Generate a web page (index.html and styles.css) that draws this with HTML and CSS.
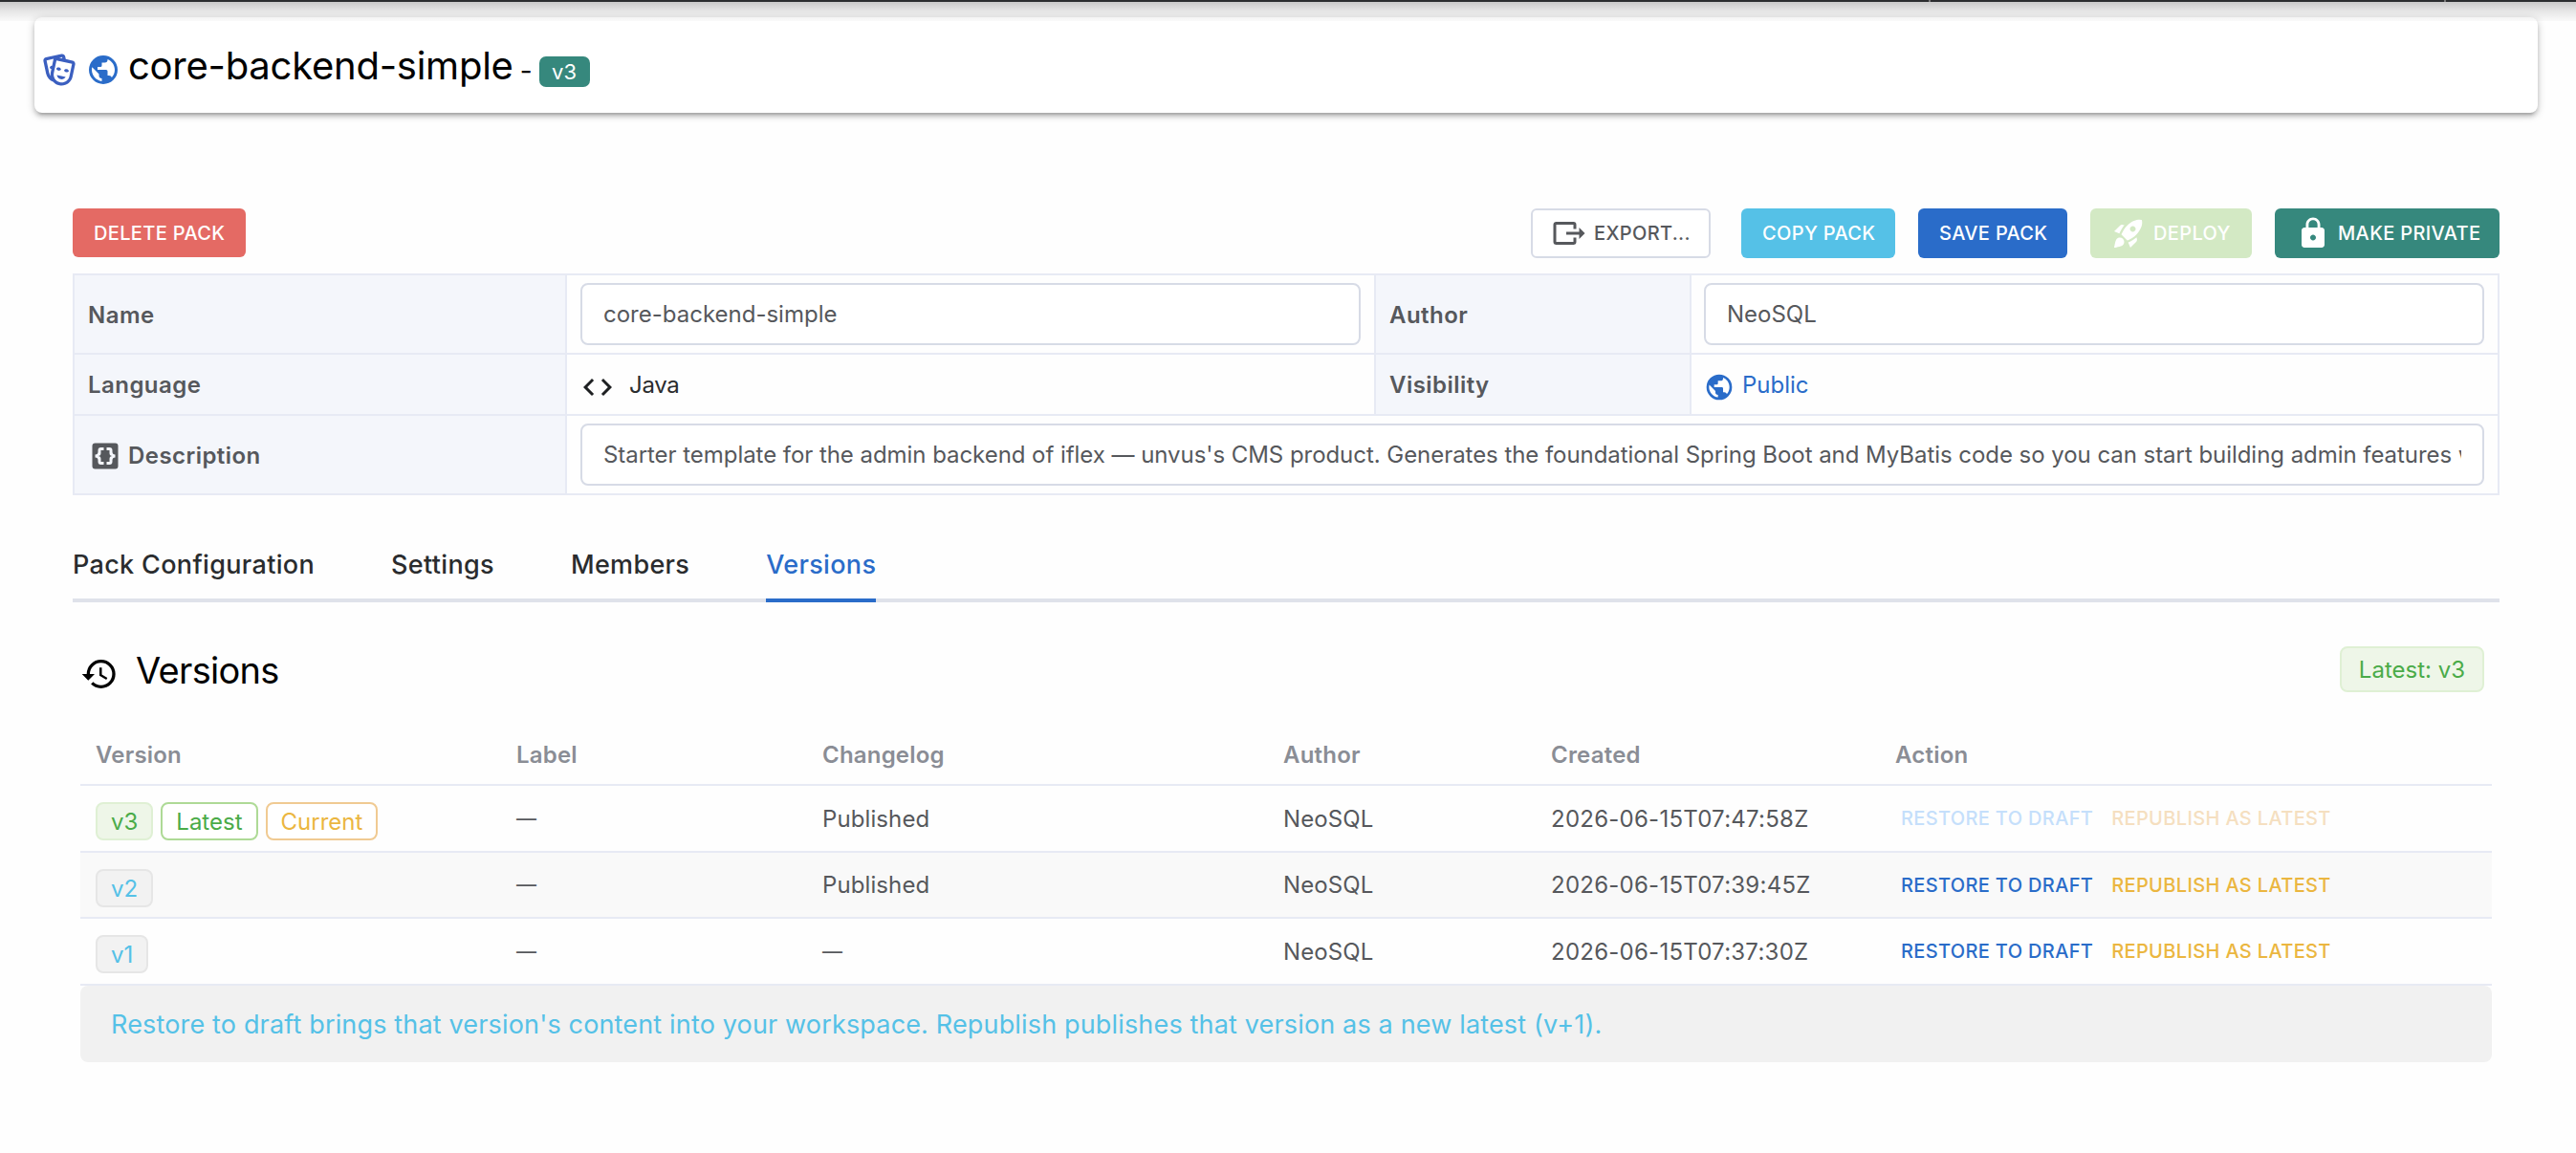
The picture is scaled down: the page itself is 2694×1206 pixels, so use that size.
FILE: index.html
```html
<!DOCTYPE html>
<html lang="en">
<head>
<meta charset="utf-8">
<title>core-backend-simple</title>
<link rel="stylesheet" href="styles.css">
</head>
<body>
<svg class="defs" width="0" height="0">
  <symbol id="earth" viewBox="0 0 24 24"><path d="M17.9,17.39C17.64,16.59 16.89,16 16,16H15V13A1,1 0 0,0 14,12H8V10H10A1,1 0 0,0 11,9V7H13A2,2 0 0,0 15,5V4.59C17.93,5.77 20,8.64 20,12C20,14.08 19.2,15.97 17.9,17.39M11,19.93C7.05,19.44 4,16.08 4,12C4,11.38 4.08,10.78 4.21,10.21L9,15V16A2,2 0 0,0 11,18M12,2A10,10 0 0,0 2,12A10,10 0 0,0 12,22A10,10 0 0,0 22,12A10,10 0 0,0 12,2Z"/></symbol>
</svg>

<header class="topbar"></header>

<section class="title-card">
  <svg class="icon-masks" viewBox="0 0 24 24"><path d="M8.11,19.45C5.94,18.65 4.22,16.78 3.71,14.35L2.05,6.54C1.81,5.46 2.5,4.4 3.58,4.17L13.35,2.1L13.38,2.09C14.45,1.88 15.5,2.57 15.72,3.63L16.07,5.3L20.42,6.23H20.45C21.5,6.47 22.18,7.53 21.96,8.59L20.3,16.41C19.5,20.18 15.78,22.6 12,21.79C10.42,21.46 9.08,20.61 8.11,19.45V19.45M20,8.18L10.23,6.1L8.57,13.92V13.95C8,16.63 9.73,19.27 12.42,19.84C15.11,20.41 17.77,18.69 18.34,16L20,8.18M16,16.5C15.37,17.57 14.11,18.16 12.83,17.89C11.56,17.62 10.65,16.57 10.5,15.34L16,16.5M8.47,5.17L4,6.13L5.66,13.94L5.67,13.97C5.82,14.68 6.12,15.32 6.53,15.87C6.43,15.1 6.45,14.3 6.62,13.5L7.05,11.5C6.6,11.42 6.21,11.17 6,10.81C6.06,10.2 6.56,9.66 7.25,9.5C7.33,9.5 7.4,9.5 7.5,9.5L8.28,5.69C8.32,5.5 8.38,5.33 8.47,5.17M15.03,12.23C15.35,11.7 16.03,11.42 16.72,11.57C17.41,11.71 17.91,12.24 18,12.86C17.67,13.38 17,13.66 16.3,13.5C15.61,13.37 15.11,12.84 15.03,12.23M10.15,11.19C10.47,10.66 11.14,10.38 11.83,10.53C12.5,10.67 13.03,11.21 13.11,11.82C12.78,12.34 12.11,12.63 11.42,12.5C10.73,12.33 10.23,11.8 10.15,11.19M11.97,4.43L13.93,4.85L13.77,4.05L11.97,4.43Z"/></svg>
  <svg class="icon-earth"><use href="#earth"/></svg>
  <h1 class="pack-title">core-backend-simple</h1>
  <span class="dash">-</span>
  <span class="badge">v3</span>
</section>

<main class="content">
  <div class="toolbar">
    <button class="btn btn-delete">DELETE PACK</button>
    <div class="toolbar-right">
      <button class="btn btn-export"><svg viewBox="0 0 24 24"><path d="M23,12L19,8V11H10V13H19V16M1,18V6C1,4.89 1.9,4 3,4H15A2,2 0 0,1 17,6V9H15V6H3V18H15V15H17V18A2,2 0 0,1 15,20H3A2,2 0 0,1 1,18Z"/></svg>EXPORT...</button>
      <button class="btn btn-copy">COPY PACK</button>
      <button class="btn btn-save">SAVE PACK</button>
      <button class="btn btn-deploy"><svg viewBox="0 0 24 24"><path d="M9.19 6.35c-2.04 2.29-3.44 5.58-3.57 5.89L2 10.69l4.05-4.05c.47-.47 1.15-.68 1.81-.55l1.33.26zM11.17 17s3.74-1.55 5.89-3.7c5.4-5.4 4.5-9.62 4.21-10.57-.95-.3-5.17-1.19-10.57 4.21C8.55 9.09 7 12.83 7 12.83L11.17 17zm6.48-2.19c-2.29 2.04-5.58 3.44-5.89 3.57L13.31 22l4.05-4.05c.47-.47.68-1.15.55-1.81l-.26-1.33zM9 18c0 .83-.34 1.58-.88 2.12C6.94 21.3 2 22 2 22s.7-4.94 1.88-6.12C4.42 15.34 5.17 15 6 15c1.66 0 3 1.34 3 3zm4-9c0-1.1.9-2 2-2s2 .9 2 2-.9 2-2 2-2-.9-2-2z"/></svg>DEPLOY</button>
      <button class="btn btn-private"><svg viewBox="0 0 24 24"><path d="M18 8h-1V6c0-2.76-2.24-5-5-5S7 3.24 7 6v2H6c-1.1 0-2 .9-2 2v10c0 1.1.9 2 2 2h12c1.1 0 2-.9 2-2V10c0-1.1-.9-2-2-2zm-6 9c-1.1 0-2-.9-2-2s.9-2 2-2 2 .9 2 2-.9 2-2 2zm3.1-9H8.9V6c0-1.71 1.39-3.1 3.1-3.1 1.71 0 3.1 1.39 3.1 3.1v2z"/></svg>MAKE PRIVATE</button>
    </div>
  </div>

  <div class="info">
    <div class="cell label">Name</div>
    <div class="cell"><div class="field">core-backend-simple</div></div>
    <div class="cell label">Author</div>
    <div class="cell cell-author"><div class="field">NeoSQL</div></div>

    <div class="cell label label-single">Language</div>
    <div class="cell"><svg class="icon-code" viewBox="0 0 24 24"><path d="M14.6,16.6L19.2,12L14.6,7.4L16,6L22,12L16,18L14.6,16.6M9.4,16.6L4.8,12L9.4,7.4L8,6L2,12L8,18L9.4,16.6Z"/></svg><span class="language">Java</span></div>
    <div class="cell label label-single">Visibility</div>
    <div class="cell visibility"><svg class="icon-public"><use href="#earth"/></svg>Public</div>

    <div class="cell label"><svg class="icon-braces" viewBox="0 0 24 24"><path fill-rule="evenodd" d="M5,3H19A2,2 0 0,1 21,5V19A2,2 0 0,1 19,21H5A2,2 0 0,1 3,19V5A2,2 0 0,1 5,3ZM11,8V6H9A2,2 0 0,0 7,8V9A2,2 0 0,1 5,11V13A2,2 0 0,1 7,15V16A2,2 0 0,0 9,18H11V16H9V14A2,2 0 0,0 7,12A2,2 0 0,0 9,10V8ZM13,8V6H15A2,2 0 0,1 17,8V9A2,2 0 0,0 19,11V13A2,2 0 0,0 17,15V16A2,2 0 0,1 15,18H13V16H15V14A2,2 0 0,1 17,12A2,2 0 0,1 15,10V8Z"/></svg>Description</div>
    <div class="cell cell-wide"><div class="field"><span class="field-text">Starter template for the admin backend of iflex — unvus's CMS product. Generates the foundational Spring Boot and MyBatis code so you can start building admin features with</span></div></div>
  </div>

  <nav class="tabs">
    <a class="tab">Pack Configuration</a>
    <a class="tab">Settings</a>
    <a class="tab">Members</a>
    <a class="tab active">Versions</a>
  </nav>

  <section class="versions">
    <div class="versions-head">
      <svg class="icon-history" viewBox="0 0 24 24"><path d="M13.5,8H12V13L16.28,15.54L17,14.33L13.5,12.25V8M13,3A9,9 0 0,0 4,12H1L4.96,16.03L9,12H6A7,7 0 0,1 13,5A7,7 0 0,1 20,12A7,7 0 0,1 13,19C11.07,19 9.32,18.21 8.06,16.94L6.64,18.36C8.27,20 10.5,21 13,21A9,9 0 0,0 22,12A9,9 0 0,0 13,3"/></svg>
      <h2 class="versions-title">Versions</h2>
      <span class="tag success latest-tag">Latest: v3</span>
    </div>

    <div class="row head">
      <span>Version</span><span>Label</span><span>Changelog</span><span>Author</span><span>Created</span><span>Action</span>
    </div>
    <div class="row">
      <div class="tags"><span class="tag success">v3</span><span class="tag plain-success">Latest</span><span class="tag plain-warning">Current</span></div>
      <span class="empty">—</span><span>Published</span><span>NeoSQL</span><span class="date">2026-06-15T07:47:58Z</span>
      <div class="actions disabled"><a class="restore">RESTORE TO DRAFT</a><a class="republish">REPUBLISH AS LATEST</a></div>
    </div>
    <div class="row striped">
      <div class="tags"><span class="tag info-tag">v2</span></div>
      <span class="empty">—</span><span>Published</span><span>NeoSQL</span><span class="date">2026-06-15T07:39:45Z</span>
      <div class="actions"><a class="restore">RESTORE TO DRAFT</a><a class="republish">REPUBLISH AS LATEST</a></div>
    </div>
    <div class="row">
      <div class="tags"><span class="tag info-tag">v1</span></div>
      <span class="empty">—</span><span class="empty">—</span><span>NeoSQL</span><span class="date">2026-06-15T07:37:30Z</span>
      <div class="actions"><a class="restore">RESTORE TO DRAFT</a><a class="republish">REPUBLISH AS LATEST</a></div>
    </div>
    <p class="hint">Restore to draft brings that version's content into your workspace. Republish publishes that version as a new latest (v+1).</p>
  </section>
</main>
</body>
</html>
```
FILE: styles.css
```css
* { box-sizing: border-box; }

body {
  margin: 0;
  background: #fefefe;
  font-family: Inter, "Liberation Sans", sans-serif;
  font-size: 24px;
  color: #56585c;
  overflow: hidden;
}

svg { fill: currentColor; flex: none; }
.defs { position: absolute; }

/* Bottom edge of the application bar and the shadow it casts */
.topbar {
  position: relative;
  height: 2px;
  background:
    linear-gradient(#777, #777) 2017px 0 / 2px 2px no-repeat,
    linear-gradient(#777, #777) 2556px 0 / 2px 2px no-repeat,
    #2b2d2f;
}
.topbar::after {
  content: "";
  position: absolute;
  z-index: 1;
  top: 2px;
  left: 0;
  right: 0;
  height: 20px;
  background: linear-gradient(rgba(0, 0, 0, .21), rgba(0, 0, 0, .09) 50%, rgba(0, 0, 0, .02));
}

.title-card {
  display: flex;
  align-items: center;
  height: 100px;
  margin: 16px 40px 0 36px;
  padding-left: 6px;
  border-radius: 8px;
  background: #fff;
  color: #000;
  box-shadow: 0 2px 10px rgba(0, 0, 0, .2), 0 4px 4px rgba(0, 0, 0, .14), 0 6px 2px -4px rgba(0, 0, 0, .12);
}
.icon-masks { width: 40px; height: 40px; margin-top: 10px; color: #3b5fc0; }
.icon-earth { width: 36px; height: 36px; margin: 10px 0 0 8px; color: #2a6cc9; }
.pack-title { margin: 1px 0 0 8px; font-size: 40px; font-weight: 400; letter-spacing: -.25px; }
.dash { margin: 12px 0 0 7px; font-size: 28px; }
.badge {
  width: 53px;
  height: 32px;
  margin: 14px 0 0 7px;
  border-radius: 7px;
  background: #36887d;
  color: #fff;
  font-size: 22px;
  line-height: 33px;
  text-align: center;
}

.content { padding: 100px 80px 0 76px; }

.toolbar { display: flex; justify-content: space-between; }
.toolbar-right { display: flex; gap: 24px; }
.btn {
  display: flex;
  align-items: center;
  height: 52px;
  padding: 0 0 0 22px;
  gap: 8px;
  border: 0;
  border-radius: 6px;
  color: #fff;
  font: 450 20px Inter, sans-serif;
  letter-spacing: .35px;
  white-space: nowrap;
}
.btn svg { width: 36px; height: 36px; }
.btn-delete { width: 181px; height: 51px; background: #e46a64; }
.btn-export { width: 188px; margin-right: 8px; padding-left: 20px; border: 2px solid #d7dbe6; background: #fff; color: #56585c; }
.btn-copy { width: 161px; background: #55c1e7; }
.btn-save { width: 156px; background: #2a6cc9; }
.btn-deploy { width: 169px; background: #d3e9c4; }
.btn-private { width: 235px; background: #36887d; }

.info {
  display: grid;
  grid-template-columns: 515px 846px 330px 845px;
  grid-template-rows: 83px 64px 83px;
  margin-top: 16px;
  border: solid #e7eaf4;
  border-width: 2px 0 0 2px;
}
.cell {
  display: flex;
  align-items: center;
  min-width: 0;
  padding: 0 14px;
  border: solid #e7eaf4;
  border-width: 0 2px 2px 0;
}
.cell-author { padding-left: 13px; }
.cell-wide { grid-column: span 3; }
.label { padding-top: 2px; background: #f4f6fb; font-weight: 600; letter-spacing: .45px; }
.label-single { padding-top: 0; }
.field {
  flex: 1;
  min-width: 0;
  height: 65px;
  padding: 0 22px;
  border: 2px solid #d7dbe6;
  border-radius: 8px;
  background: #fff;
  line-height: 62px;
}
.field-text { display: block; overflow: hidden; white-space: nowrap; letter-spacing: -.05px; }
.language { margin-left: 15px; color: #2a2c2e; letter-spacing: -.3px; }
.icon-code { width: 36px; height: 36px; margin-top: 6px; color: #1e2022; }
.visibility { color: #2a6cc9; }
.icon-public { width: 32px; height: 32px; margin: 5px 8px 0 -1px; }
.icon-braces { width: 36px; height: 36px; margin: 1px 6px 0 0; }

.tabs {
  display: flex;
  gap: 80px;
  height: 80px;
  margin-top: 32px;
  border-bottom: 4px solid #dfe2ea;
}
.tab {
  height: 80px;
  border-bottom: 4px solid transparent;
  color: #2a2c2e;
  font-size: 27px;
  font-weight: 500;
  letter-spacing: .33px;
  line-height: 82px;
}
.tab.active { border-color: #2a6cc9; color: #2a6cc9; }

.versions { padding: 46px 8px 0; }
.versions-head { display: flex; align-items: center; height: 48px; margin-bottom: 35px; padding-right: 8px; }
.icon-history { width: 40px; height: 40px; margin-top: 10px; color: #000; }
.versions-title { margin: 1px 0 0 18px; color: #000; font-size: 38px; font-weight: 400; letter-spacing: -.7px; }

.row {
  display: grid;
  grid-template-columns: 440px 320px 482px 280px 360px 640px;
  align-items: center;
  height: 70px;
  border-bottom: 2px solid #e7eaf4;
  letter-spacing: .1px;
}
.row > * { padding-left: 16px; }
.row.striped { height: 69px; background: #f9f9f9; }
.row.head { height: 63px; color: #8a8d95; font-weight: 600; letter-spacing: .2px; }
.date { letter-spacing: .25px; }
.empty { font-size: 21px; }

.tags { display: flex; gap: 8px; padding-top: 6px; }
.tag {
  height: 40px;
  padding: 0 14px;
  border: 2px solid;
  border-radius: 8px;
  letter-spacing: 0;
  line-height: 37px;
}
.success { border-color: #dff0d4; background: #eef6e8; color: #4aab48; }
.plain-success { border-color: #aeda96; background: #fff; color: #4aab48; }
.plain-warning { border-color: #f0ca92; background: #fff; color: #ebb640; }
.info-tag { border-color: #e6e6e6; background: #f2f2f2; color: #55c1e7; }
.latest-tag { height: 48px; margin-left: auto; padding: 0 18px; line-height: 46px; }

.actions { display: flex; gap: 19px; margin-left: 6px; font-size: 20px; font-weight: 500; letter-spacing: .35px; }
.restore { color: #2a6cc9; }
.republish { color: #ebb640; }
.disabled .restore { color: #c5dffb; }
.disabled .republish { color: #f5dfc0; }

.hint {
  height: 80px;
  margin: 0;
  padding-left: 32px;
  border-radius: 8px;
  background: #f1f1f1;
  color: #55c1e7;
  font-size: 27px;
  letter-spacing: .16px;
  line-height: 82px;
}
```
